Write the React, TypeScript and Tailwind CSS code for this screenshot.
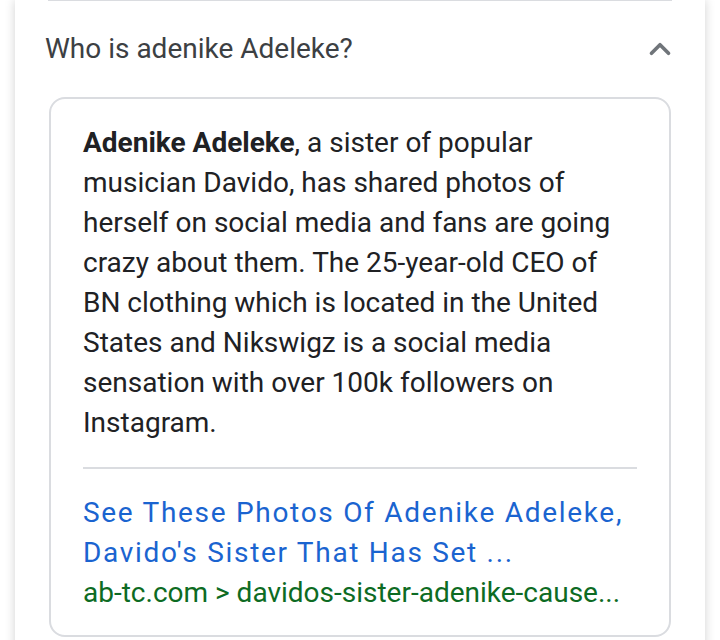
import { ChevronUp } from "lucide-react";

export default function App() {
  return (
    <div className="min-h-[640px] w-[720px] overflow-hidden bg-white font-['Roboto',sans-serif]">
      <div className="mx-[15px] h-[660px] bg-white shadow-[0_0_10px_rgba(0,0,0,0.18)]">
        <div className="mx-[33px] border-t border-[#dadce0]" />
        <div className="flex h-[96px] items-center justify-between pl-[30px] pr-[28px]">
          <span className="text-[28px] text-[#3c4043]">Who is adenike Adeleke?</span>
          <ChevronUp className="h-[34px] w-[34px] text-[#70757a]" strokeWidth={2.6} />
        </div>
        <div className="mx-[34px] rounded-[16px] border-2 border-[#dadce0] px-[32px] pt-[24px] pb-[22px]">
          <p className="pr-[20px] text-[28px] leading-[40px] text-[#202124]">
            <b className="font-bold">Adenike Adeleke</b>, a sister of popular musician Davido, has shared photos of herself on social media and fans are going crazy about them. The 25-year-old CEO of BN clothing which is located in the United States and Nikswigz is a social media sensation with over 100k followers on Instagram.
          </p>
          <div className="mt-[24px] border-t-2 border-[#dadce0]" />
          <div className="pt-[24px]">
            <div className="text-[28px] leading-[40px] tracking-[1.7px] text-[#1a64d0]">
              See These Photos Of Adenike Adeleke, Davido's Sister That Has Set ...
            </div>
            <div className="text-[28px] leading-[40px] text-[#0d6b23]">
              ab-tc.com &gt; davidos-sister-adenike-cause...
            </div>
          </div>
        </div>
      </div>
    </div>
  );
}
